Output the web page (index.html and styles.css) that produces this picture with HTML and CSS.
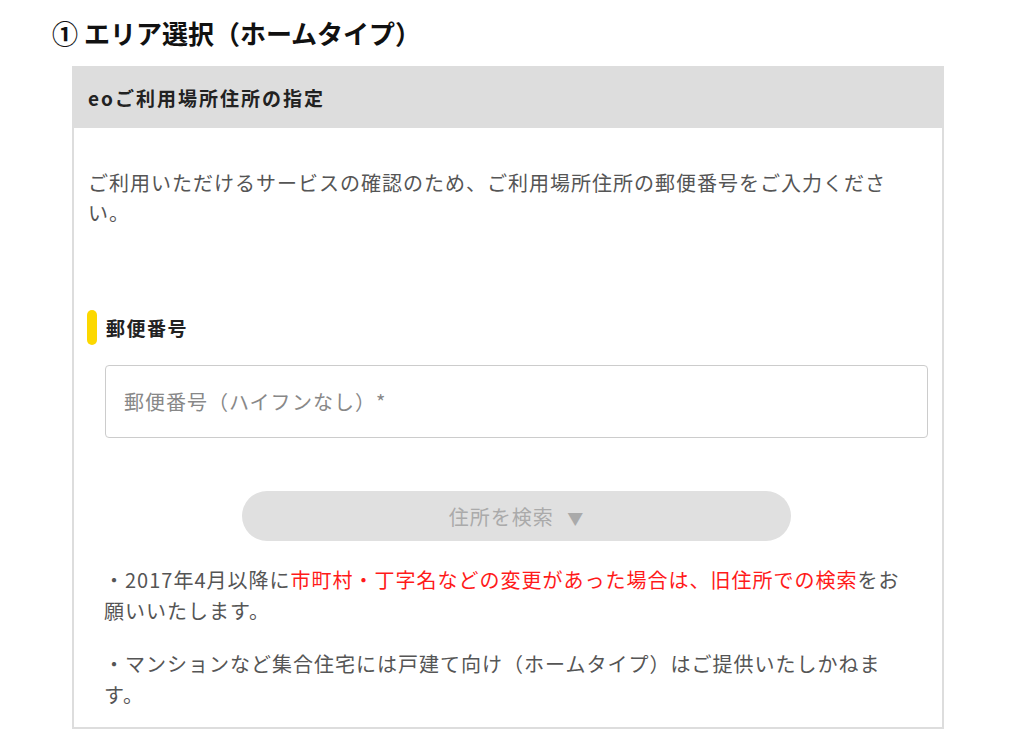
FILE: index.html
```html
<!DOCTYPE html>
<html lang="ja">
<head>
    <meta charset="UTF-8">
    <meta name="viewport" content="width=device-width, initial-scale=1.0">
    <title>エリア選択（ホームタイプ）</title>
    <link rel="stylesheet" href="styles.css">
</head>
<body>
    <h1 class="step-title">① エリア選択（ホームタイプ）</h1>

    <!-- Address card -->
    <div class="card">
        <div class="card-head">eoご利用場所住所の指定</div>
        <div class="card-body">
            <p class="lead">ご利用いただけるサービスの確認のため、ご利用場所住所の郵便番号をご入力ください。</p>

            <div class="field-label">郵便番号</div>
            <input type="text" class="zip-input" placeholder="郵便番号（ハイフンなし）*">

            <div class="search-row">
                <button class="search-btn" disabled>住所を検索 <span class="arrow">▼</span></button>
            </div>

            <p class="note">・2017年4月以降に<span class="red">市町村・丁字名などの変更があった場合は、旧住所での検索</span>をお願いいたします。</p>
            <p class="note">・マンションなど集合住宅には戸建て向け（ホームタイプ）はご提供いたしかねます。</p>
        </div>
    </div>
</body>
</html>
```

FILE: styles.css
```css
* {
    margin: 0;
    padding: 0;
    box-sizing: border-box;
}
body {
    font-family: "Noto Sans CJK JP", "Noto Sans", sans-serif;
    background: #fff;
    color: #555;
    padding: 18px 0 0 52px;
}
.step-title {
    font-size: 26px;
    font-weight: 700;
    color: #111;
    line-height: 30px;
    margin-bottom: 18px;
}
.card {
    width: 872px;
    margin-left: 20px;
    border: 2px solid #ddd;
    border-top: none;
}
.card-head {
    background: #ddd;
    height: 62px;
    display: flex;
    align-items: center;
    padding-left: 14px;
    font-size: 19px;
    font-weight: 700;
    letter-spacing: 2px;
    color: #222;
}
.card-body {
    padding: 40px 14px 17px 14px;
}
.lead {
    font-size: 20px;
    letter-spacing: 1px;
    line-height: 30px;
    max-width: 812px;
}
.field-label {
    position: relative;
    margin-top: 82px;
    height: 35px;
    line-height: 35px;
    padding-left: 18px;
    font-size: 19px;
    font-weight: 700;
    color: #222;
    letter-spacing: 1.5px;
}
.field-label::before {
    content: "";
    position: absolute;
    left: -1px;
    top: 0;
    width: 10px;
    height: 35px;
    border-radius: 5px;
    background: #fcd800;
}
.zip-input {
    display: block;
    margin: 20px 0 0 17px;
    width: 823px;
    height: 73px;
    border: 1px solid #ccc;
    border-radius: 4px;
    padding: 0 18px;
    font-family: inherit;
    font-size: 20px;
    letter-spacing: 1px;
    color: #333;
}
.zip-input::placeholder {
    color: #888;
}
.search-row {
    display: flex;
    justify-content: center;
    margin-top: 53px;
    padding-left: 17px;
}
.search-btn {
    width: 549px;
    height: 50px;
    border: none;
    border-radius: 25px;
    background: #e0e0e0;
    color: #aaa;
    font-family: inherit;
    font-size: 20px;
    letter-spacing: 1px;
}
.search-btn .arrow {
    font-size: 16px;
    margin-left: 8px;
}
.note {
    margin: 23px 0 0 16px;
    font-size: 20px;
    letter-spacing: 1px;
    line-height: 31px;
    max-width: 800px;
}
.note + .note {
    margin-top: 22px;
}
.red {
    color: #ff1a1a;
}
```
